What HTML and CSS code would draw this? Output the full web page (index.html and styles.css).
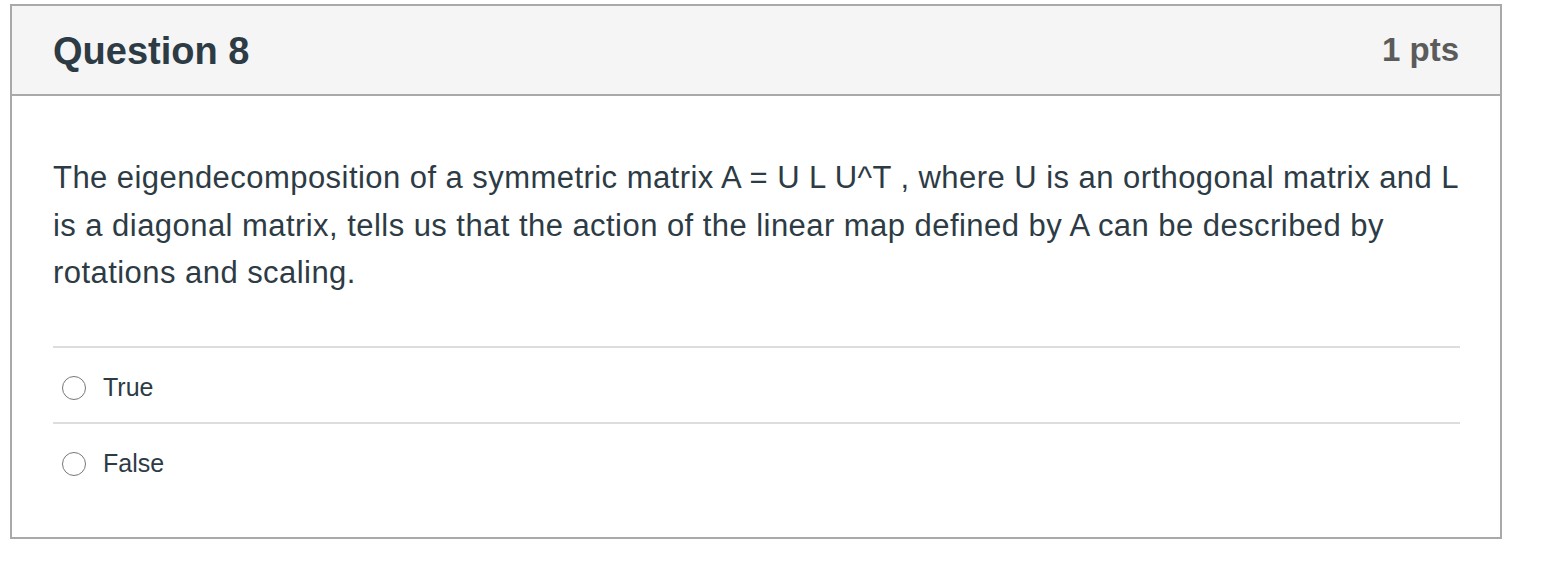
FILE: index.html
```html
<!DOCTYPE html>
<html lang="en">
<head>
<meta charset="utf-8">
<title>Question 8</title>
<link rel="stylesheet" href="styles.css">
</head>
<body>
<div class="card">
  <div class="card-header">
    <h2 class="q-title">Question 8</h2>
    <span class="q-points">1 pts</span>
  </div>
  <div class="card-body">
    <p class="q-text">The eigendecomposition of a symmetric matrix A = U L U^T , where U is an orthogonal matrix and L is a diagonal matrix, tells us that the action of the linear map defined by A can be described by rotations and scaling.</p>
    <div class="answers">
      <label class="answer">
        <span class="radio"></span>
        <span class="answer-label">True</span>
      </label>
      <label class="answer">
        <span class="radio"></span>
        <span class="answer-label">False</span>
      </label>
    </div>
  </div>
</div>
</body>
</html>
```
FILE: styles.css
```css
html, body {
  margin: 0;
  padding: 0;
  background: #ffffff;
}

body {
  font-family: "Liberation Sans", Arial, Helvetica, sans-serif;
  color: #2d3b45;
}

.card {
  box-sizing: border-box;
  width: 1492px;
  margin: 4px 0 0 10px;
  border: 2px solid #a9a9a9;
  background: #ffffff;
}

.card-header {
  box-sizing: border-box;
  height: 90px;
  display: flex;
  align-items: center;
  justify-content: space-between;
  padding: 0 41px 0 41px;
  background: #f5f5f5;
  border-bottom: 2px solid #a9a9a9;
}

.q-title {
  margin: 0;
  font-size: 38px;
  font-weight: bold;
  color: #2d3b45;
  line-height: 1;
  position: relative;
  top: 1px;
}

.q-points {
  font-size: 33px;
  font-weight: bold;
  color: #5b5b5b;
  line-height: 1;
  position: relative;
  top: -1px;
}

.card-body {
  padding: 58px 40px 39px 41px;
}

.q-text {
  margin: 0 -8px 49px 0;
  font-size: 31px;
  letter-spacing: 0.45px;
  line-height: 47.5px;
  color: #2d3b45;
}

.answers {
  display: flex;
  flex-direction: column;
}

.answer {
  box-sizing: border-box;
  display: flex;
  align-items: center;
  height: 76px;
  padding: 6px 0 0 9px;
  border-top: 2px solid #dddddd;
}

.radio {
  box-sizing: border-box;
  width: 24px;
  height: 24px;
  border: 1.6px solid #777777;
  border-radius: 50%;
  background: #ffffff;
  flex: none;
}

.answer-label {
  margin-left: 17px;
  font-size: 25px;
  color: #2d3b45;
}
```
